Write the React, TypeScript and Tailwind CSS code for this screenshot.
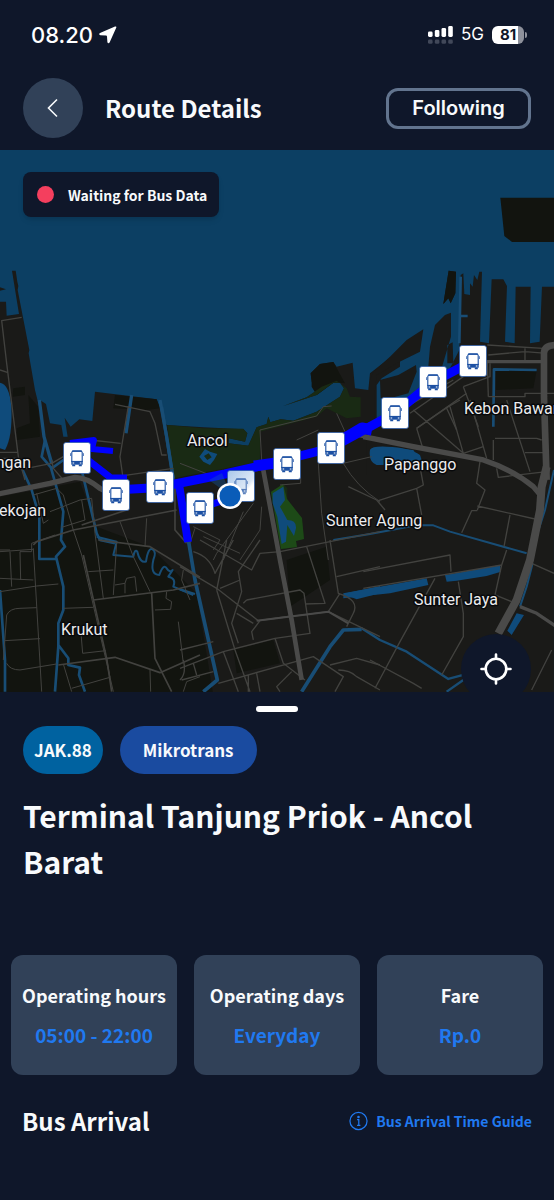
import type { JSX } from "react";

type Tile = { x: number; y: number; d: string };
type Road = Tile & { w: number };

const CONFIG = {
  code: "JAK.88",
  service: "Mikrotrans",
  title: "Terminal Tanjung Priok - Ancol Barat",
  facts: [
    { label: "Operating hours", value: "05:00 - 22:00" },
    { label: "Operating days", value: "Everyday" },
    { label: "Fare", value: "Rp.0" },
  ],
} as const;

const STOPS = [
  { x: 77, y: 458 },
  { x: 116, y: 495 },
  { x: 160, y: 487 },
  { x: 200, y: 508 },
  { x: 241, y: 486, passed: true },
  { x: 287, y: 464 },
  { x: 331, y: 448 },
  { x: 395, y: 413 },
  { x: 433, y: 382 },
  { x: 473, y: 361 },
];

const PLACES: { name: string; x: number; y: number; anchor?: "end" }[] = [
  { name: "Ancol", x: 187, y: 446 },
  { name: "Kebon Bawang", x: 464, y: 414 },
  { name: "Papanggo", x: 384, y: 470 },
  { name: "Sunter Agung", x: 326, y: 526 },
  { name: "Sunter Jaya", x: 414, y: 605 },
  { name: "Krukut", x: 61, y: 635 },
  { name: "ngan", x: 31, y: 468, anchor: "end" },
  { name: "ekojan", x: 46, y: 516, anchor: "end" },
];

/* Map geometry: every tile is drawn at 3x and placed by its top-left corner */
const LAND: Tile[] = [
  {
    x: 0,
    y: 250,
    d: "M0 112L18 118L0 122ZM0 155H18L20 197L57 192L36 62L47 62L52 95L55 108L53 120L88 300L86 310L105 420L120 480L120 450L138 462L150 520L184 525L190 560L203 560L194 503L212 530L238 508L277 513L285 425L470 448L480 475L496 540L525 700H0Z",
  },
  {
    x: 160,
    y: 350,
    d: "M0 190L20 225L130 232L250 238L262 250L255 275L207 265L205 280L265 287L290 232L320 222L325 200L331 217L362 208L400 212L470 185L540 140L552 115L540 98L520 98L470 135L370 168L440 142L470 122L455 95L452 70L480 42L520 36L530 50L578 38L585 115L625 120L630 70L720 0V50L665 85L650 105V215L720 225V390H0Z",
  },
  {
    x: 370,
    y: 180,
    d: "M0 600L10 575L60 530L110 480L160 448L150 515L80 550L20 585L14 640V740H0ZM30 600L85 585L138 555L140 575L115 640L60 655H32ZM175 560L180 500L195 435L225 405L243 398V470L225 530L215 565ZM236 272L258 275L256 340L242 370L235 355L220 372ZM232 495L248 487L250 550H232ZM268 510L272 285L280 280L283 342L300 345V310L308 320L312 285L322 300L328 275H336L330 485L357 490L365 298H400L411 318L405 485L434 490L437 320H482L480 490L509 485L516 320H560V890H-10V740L60 690L200 600L240 565Z",
  },
  { x: 0, y: 475, d: "M0 0H1662V660H0Z" },
];

const DARK_LAND: Tile[] = [
  { x: 370, y: 180, d: "M391 53H560V186H426L403 168Z" },
  { x: 370, y: 180, d: "M236 272L258 275L256 340L242 370L235 355L220 372Z" },
  { x: 160, y: 350, d: "M455 95L452 70L480 42L520 36L555 100L540 98L520 98L470 135L455 110Z" },
  { x: 0, y: 440, d: "M0 170L240 125L290 260L450 320L590 460L640 765H0Z" },
  { x: 0, y: 250, d: "M40 415L75 410V435L38 440ZM85 435L115 470L120 560L50 570V535L90 520ZM345 435L470 448L480 475L440 480L340 475Z" },
  { x: 370, y: 180, d: "M375 570L500 572L490 625L378 630Z" },
  { x: 180, y: 540, d: "M160 330L280 300L300 370L170 400ZM320 60L440 20L450 120L330 200Z" },
];

const PARKS: Tile[] = [
  {
    x: 160,
    y: 350,
    d: "M22 225L130 235L250 236L262 250L255 275L207 265L205 280L265 287L290 232L320 222L325 200L331 217L362 208L400 212L470 185L540 140L552 115L540 98L520 98L470 135L370 168L440 142L485 110L530 92L560 115L570 140L602 142V200L560 205L500 175L470 200L300 245L300 335L40 385Z",
  },
  { x: 200, y: 470, d: "M212 65L250 42L262 55V88L305 145L312 207L288 212L290 232L242 238Z" },
];

const LAKES: Tile[] = [
  { x: 160, y: 350, d: "M118 320L135 297L150 305L172 312L162 330L150 345L130 335ZM132 318L142 330L155 322L146 310ZM630 300Q640 290 680 292L760 300L780 330L720 345L650 345Q625 335 630 300Z" },
  { x: 370, y: 400, d: "M0 150Q5 138 50 140Q120 142 150 165L155 180Q100 200 40 195Q0 190 0 150ZM225 525L390 495L393 515L350 528L260 542L230 545ZM-80 580L170 535L175 555L60 580L-80 595ZM412 692L440 640L462 645L425 705Z" },
  { x: 200, y: 470, d: "M218 70L250 50L255 90L240 110L262 150Q290 150 288 175L282 198L262 165L258 215L245 222L232 140L218 100Z" },
  { x: 0, y: 250, d: "M0 398Q28 402 34 470Q38 560 15 600L0 595Z" },
  { x: 180, y: 540, d: "M498 160L600 138V160L530 178L510 170Z" },
];

const CANALS: Road[] = [
  { x: 0, y: 250, w: 10, d: "M118 450L132 560L155 640M395 435L378 550M480 450L500 560L520 690" },
  { x: 0, y: 440, w: 8, d: "M68 90L95 150L118 230V357H168M152 80L190 215L183 300L195 320L168 350L190 440V510L175 550V620L165 755M175 615L205 655V675L240 683L237 705L255 755M245 90L290 280L300 300L345 310M135 0L125 50L155 85L190 60M0 450L15 660V755" },
  { x: 0, y: 440, w: 6, d: "M290 290L350 305L340 345L400 350Q405 325 412 335Q420 370 438 365Q445 320 458 328Q470 335 460 360Q450 405 478 405Q490 370 500 385Q510 400 518 390L505 410Q530 415 520 440L580 465" },
  { x: 180, y: 540, w: 11, d: "M25 0L45 120L112 420L70 455M365 455L450 320L490 270L545 268" },
  { x: 180, y: 540, w: 7, d: "M0 148L45 162M545 265L600 300L680 335L805 417L850 405M850 420L800 455" },
  { x: 370, y: 400, w: 6, d: "M-110 420L0 402L140 376H190L240 395L470 460M488 490L470 560L450 620M552 210L525 330L480 470" },
  { x: 370, y: 180, w: 8, d: "M500 570L372 568L370 740M270 408H293M272 290L268 490" },
  { x: 160, y: 350, w: 9, d: "M5 170L40 385" },
];

const ROADS: Road[] = [
  { x: 0, y: 250, w: 4, d: "M65 202L5 212L20 340L55 620L75 690M0 360L22 367M345 463L450 485L465 520L485 615H500M385 468L360 620L370 690M270 570L362 580M350 680L520 655M0 607H55M0 625H55L80 655L155 640L190 620M155 630L160 655L190 690" },
  { x: 0, y: 440, w: 3, d: "M100 165L170 145L190 165L220 270L245 345L340 755M110 160L130 250L145 240M150 215L240 180L275 175L285 280L310 475M245 180L255 240L185 262M0 335L100 328M0 415L100 420M30 335L35 440M60 335L62 420M0 455L110 438L175 432M100 325L125 755M20 525Q30 505 60 505L110 503M20 525L10 660M15 602L120 596M190 505L280 502M20 670Q30 690 60 690L170 672M265 395L340 390M350 310L340 465M345 435L375 430L380 415L405 410L410 455M375 430V460M243 580L248 640L318 632M190 672L215 755M215 745L330 712L320 655M500 455L498 475L515 485L512 508L465 510M535 545L550 670M450 690L452 755M550 755L560 725L600 710M570 480L545 420L550 390M440 235L435 320M360 245L400 350L450 455M0 330H30M60 335H95V310L165 285" },
  { x: 0, y: 440, w: 5, d: "M100 315L110 305L220 270L530 210M295 300L450 320L600 412M280 480L520 450L600 430M455 460L465 655L515 755M175 675L345 652L480 698L600 645M250 345L320 655L335 755M525 130V270L560 310M245 255L380 210" },
  { x: 180, y: 380, w: 3, d: "M240 150L410 108L430 80L455 78M240 150L245 240M0 250L90 285L220 265M415 250L425 400L445 540M300 315L362 310V295M220 370L110 520L100 540M245 380L240 450L180 540M190 395L130 540M40 440L120 480L100 510M45 445L30 490M70 470L180 520M470 100L495 155M350 180L415 150M490 250Q530 320 600 365M490 250L575 230" },
  { x: 180, y: 540, w: 4, d: "M60 0L215 90L240 40L300 35L600 -25M140 0L110 150M160 0L105 100Q90 50 40 35M240 0L175 95L185 155L155 250L175 310M0 80L110 145L235 242L445 215L480 160M235 242L335 228M220 300L215 275L240 242M110 150L165 330L210 455M120 145L180 120M200 180L360 150L372 160L390 280L285 295M190 190L200 180M170 220L220 250M445 215L600 290M450 0L475 160Q540 180 520 220L500 260M380 20L435 190L375 192M470 110L600 80M130 335L175 455M0 330L100 305M0 385L130 335L285 295M5 420L100 395M40 370L50 405M115 430L400 350L490 410L465 455M285 295L310 370L375 420M335 395L290 440L300 455M205 405V455M230 400L240 455M450 375L530 355L600 375M475 390Q510 390 530 410L600 450M0 420Q20 400 10 360" },
  { x: 370, y: 400, w: 4, d: "M130 30L280 160L240 20M140 85L235 20L270 0M140 85L160 150M280 160L340 140M300 0L350 175M375 115H500L515 120M410 0L480 215M465 158H520M330 185L320 250L345 270L322 330M380 205L385 232L530 215M25 302L140 265L155 345M-65 260L20 300L45 330M140 265L160 255L150 200M322 318L495 357M322 332H305L275 398M420 345L402 440M-20 515L240 465L243 515M-20 565L395 495L410 450M395 495L375 585L425 605M265 545L280 640V710L215 825M195 535L90 725L15 865M0 780L130 850L155 865M485 490L552 520M545 750L485 870M370 120V180" },
  { x: 370, y: 180, w: 4, d: "M352 495L520 505M355 525L465 515L530 520M465 505V540M352 545L355 650M355 650H465V640H552M280 620L360 590V550M280 620L325 740M120 700L280 590M110 680L250 600M230 685L260 750M140 745L290 640" },
];

const HIGHWAYS: Road[] = [
  { x: 0, y: 440, w: 16, d: "M-5 162L150 130L225 112Q260 112 300 145L330 160" },
  { x: 180, y: 380, w: 14, d: "M248 260L300 540L335 720L365 900" },
  { x: 180, y: 540, w: 6, d: "M230 242L445 215L505 250" },
  { x: 180, y: 380, w: 12, d: "M535 165L600 180" },
  { x: 370, y: 400, w: 16, d: "M-20 110L130 140L340 180Q430 210 490 260L515 290" },
  { x: 370, y: 400, w: 24, d: "M530 200L515 260L510 330L480 480L440 600L385 700" },
  { x: 370, y: 180, w: 20, d: "M560 495Q522 495 522 520V650L530 900" },
  { x: 370, y: 180, w: 10, d: "M350 545H520" },
  { x: 370, y: 400, w: 10, d: "M450 620L500 640L560 680" },
];

function Shapes({ tiles, fill }: { tiles: Tile[]; fill: string }) {
  return (
    <g fill={fill} fillRule="evenodd">
      {tiles.map((t, i) => (
        <path key={i} d={t.d} transform={`translate(${t.x} ${t.y}) scale(0.3333)`} />
      ))}
    </g>
  );
}

function Lines({ tiles, stroke }: { tiles: Road[]; stroke: string }) {
  return (
    <g fill="none" stroke={stroke} strokeLinejoin="round">
      {tiles.map((t, i) => (
        <path
          key={i}
          d={t.d}
          strokeWidth={t.w}
          transform={`translate(${t.x} ${t.y}) scale(0.3333)`}
        />
      ))}
    </g>
  );
}

function Stop({ x, y, passed }: { x: number; y: number; passed?: boolean }) {
  return (
    <g transform={`translate(${x} ${y})`}>
      <rect
        x="-13.5"
        y="-15.5"
        width="27"
        height="31"
        rx="2.5"
        fill={passed ? "url(#faded)" : "#fff"}
        stroke="#2356a8"
        strokeWidth="0.7"
      />
      <g fill="none" stroke="#1c50a3" opacity={passed ? 0.7 : 1}>
        <path d="M-5.2 4V-5.4Q-5.2 -6.8 -3.7 -6.8H3.7Q5.2 -6.8 5.2 -5.4V4" strokeWidth="1.1" />
        <path d="M-4.8 -7H4.8" strokeWidth="1.5" />
        <path d="M-6.5 -4.8V-2M6.5 -4.8V-2" strokeWidth="0.7" />
        <path d="M-5.7 4.8H5.7" strokeWidth="3.8" />
        <path d="M-4.8 7.4H-1.8M1.8 7.4H4.8" strokeWidth="1.8" />
        <path d="M-4.4 5H-2.8M2.8 5H4.4" stroke="#fff" strokeWidth="1.2" />
      </g>
    </g>
  );
}

function RouteMap() {
  return (
    <svg viewBox="0 150 554 542" className="block h-auto w-full bg-[#0c3f63]" role="img" aria-label="Route map">
      <defs>
        <linearGradient id="faded" x1="0" y1="0" x2="1" y2="1">
          <stop offset="0" stopColor="#a9c8ea" />
          <stop offset="0.6" stopColor="#dce8f6" />
          <stop offset="0.7" stopColor="#fff" />
        </linearGradient>
      </defs>

      <Shapes tiles={LAND} fill="#1a1a18" />
      <Shapes tiles={DARK_LAND} fill="#12140f" />
      <Shapes tiles={PARKS} fill="#192a14" />
      <path d="M271 492L283 484L287 499L302 518L304 539L296 541L297 547L281 549Z" fill="#1d4a17" />
      <Shapes tiles={LAKES} fill="#0f4b7b" />
      <Lines tiles={CANALS} stroke="#184d75" />
      <Lines tiles={ROADS} stroke="#42423f" />
      <Lines tiles={HIGHWAYS} stroke="#4a4a49" />

      {/* Route line */}
      <g fill="none" stroke="#0000fe" strokeLinejoin="round">
        <path d="M70 443L94 440L92 449L113 451" strokeWidth="6" />
        <path d="M84 457L111 478H127" strokeWidth="7" />
        <path d="M116 490L150 488L175 484L225 474L260 466L331 448L362 431L395 413L433 382L473 361" strokeWidth="9" />
        <path d="M254 466L290 461M345 438L362 428L372 430" strokeWidth="11" />
        <path d="M179 484L188 542" strokeWidth="8" />
        <path d="M200 508L231 498" strokeWidth="7" />
      </g>

      {STOPS.map((s) => (
        <Stop key={s.x} {...s} />
      ))}

      {/* User position */}
      <path d="M231 496L209 480L222 473Z" fill="#1460b0" opacity="0.35" />
      <circle cx="230" cy="496" r="13" fill="#fff" />
      <circle cx="230" cy="496" r="10.5" fill="#0a5cb8" />

      <g
        className="font-['Roboto',sans-serif] text-base font-normal"
        fill="#ececee"
        stroke="#08090b"
        strokeWidth="3"
        strokeLinejoin="round"
        paintOrder="stroke"
      >
        {PLACES.map((p) => (
          <text key={p.name} x={p.x} y={p.y} textAnchor={p.anchor}>
            {p.name}
          </text>
        ))}
      </g>
    </svg>
  );
}

function StatusBar() {
  return (
    <div className="flex h-[70px] items-center justify-between pl-[31px] pr-[27px] font-['Inter',sans-serif] text-white">
      <div className="flex items-center gap-1.5">
        <span className="text-[22px] font-medium">08.20</span>
        <svg width="18" height="18" viewBox="0 0 18 18" fill="currentColor" aria-hidden>
          <path d="M16 0.6Q17.9 0 17.2 1.8L10.6 16.6Q9.2 18.2 8.4 16.2L8 10.6Q7.9 9.6 7 9.5L1.4 9.2Q-0.8 8.4 1 7.1Z" />
        </svg>
      </div>
      <div className="flex items-center gap-2">
        <svg width="25" height="18" viewBox="0 0 25 18" aria-hidden>
          <g fill="#fff">
            <rect x="0" y="5.5" width="4.6" height="5.5" rx="1.4" />
            <rect x="6.8" y="4" width="4.6" height="7" rx="1.4" />
            <rect x="13.5" y="2" width="4.6" height="9" rx="1.4" />
            <rect x="20.2" y="0" width="4.6" height="11" rx="1.4" />
          </g>
          <g fill="#414859">
            <rect x="0" y="13.6" width="4.6" height="4.2" rx="1.4" />
            <rect x="6.8" y="13.6" width="4.6" height="4.2" rx="1.4" />
            <rect x="13.5" y="13.6" width="4.6" height="4.2" rx="1.4" />
            <rect x="20.2" y="13.6" width="4.6" height="4.2" rx="1.4" />
          </g>
        </svg>
        <span className="text-[17px] font-normal">5G</span>
        <div className="flex items-center gap-px">
          <div className="flex h-[18px] w-8 items-center justify-center rounded-md bg-linear-to-r from-white from-80% to-[#8e919b] to-80% text-[15px] font-bold text-[#0f172a]">
            81
          </div>
          <span className="h-1.5 w-0.5 rounded-r-full bg-[#8e919b]" />
        </div>
      </div>
    </div>
  );
}

export default function App(): JSX.Element {
  return (
    <div className="min-h-screen bg-[#0f172a] font-['Noto_Sans_CJK_JP',sans-serif] font-bold text-slate-50">
      <StatusBar />

      <header className="flex items-center px-[23px] pt-2 pb-3">
        <button
          type="button"
          aria-label="Back"
          className="flex size-[60px] items-center justify-center rounded-full bg-slate-700"
        >
          <svg width="12" height="20" viewBox="0 0 12 20" fill="none" stroke="currentColor" strokeWidth="1.6" aria-hidden>
            <path d="M10 1.5L1.5 10L10 18.5" />
          </svg>
        </button>
        <h1 className="ml-[22px] text-2xl leading-8">Route Details</h1>
        <button
          type="button"
          className="ml-auto h-[41px] w-[145px] rounded-xl border-3 border-slate-500 font-['Inter',sans-serif] text-xl leading-6 font-semibold"
        >
          Following
        </button>
      </header>

      <main>
        <section className="relative overflow-hidden">
          <RouteMap />
          <div className="absolute top-[22px] left-[23px] flex h-[45px] items-center gap-3.5 rounded-lg bg-[#0f172a] pr-3 pl-3.5 text-sm leading-5 shadow-md">
            <span className="size-[17px] rounded-full bg-[#f43f5e]" />
            Waiting for Bus Data
          </div>
          <button
            type="button"
            aria-label="Center on my location"
            className="absolute right-[23px] -bottom-3 flex size-[70px] items-center justify-center rounded-full bg-[#0f172a]"
          >
            <svg width="32" height="32" viewBox="0 0 32 32" fill="none" stroke="#fff" strokeWidth="2.6" strokeLinecap="round" aria-hidden>
              <circle cx="16" cy="16" r="10.3" />
              <path d="M16 1.5V5.5M16 26.5V30.5M1.5 16H5.5M26.5 16H30.5" />
            </svg>
          </button>
        </section>

        {/* Bottom sheet */}
        <section className="pt-3.5 pb-16">
          <div className="mx-auto h-1.5 w-[42px] rounded-full bg-white" />

          <div className="mt-3.5 flex gap-[17px] px-[23px] text-[17px] leading-6">
            <span className="flex h-12 items-center rounded-full bg-[#0062a0] px-[11px]">
              {CONFIG.code}
            </span>
            <span className="flex h-12 items-center rounded-full bg-[#1a4ba0] px-[23px]">
              {CONFIG.service}
            </span>
          </div>

          <h2 className="mt-[18px] px-[23px] text-3xl leading-[46px]">{CONFIG.title}</h2>

          <dl className="mt-[71px] grid grid-cols-3 gap-[17px] px-[11px]">
            {CONFIG.facts.map((f) => (
              <div
                key={f.label}
                className="flex h-[120px] flex-col items-center justify-center gap-3 rounded-xl bg-slate-700 text-center whitespace-nowrap"
              >
                <dt className="text-lg leading-7">{f.label}</dt>
                <dd className="text-[19px] leading-7 text-[#2079f0]">{f.value}</dd>
              </div>
            ))}
          </dl>

          <div className="mt-[30px] flex items-center justify-between px-[22px]">
            <h3 className="text-2xl leading-8">Bus Arrival</h3>
            <a href="#guide" className="flex items-center gap-2 text-sm leading-5 text-[#2079f0]">
              <svg width="19" height="20" viewBox="0 0 20 20" fill="none" stroke="currentColor" strokeWidth="1.3" aria-hidden>
                <circle cx="10" cy="10" r="9" />
                <path d="M8.5 8.5H10.3V14.5M8.5 14.5H12" />
                <circle cx="10" cy="5.8" r="0.7" fill="currentColor" />
              </svg>
              Bus Arrival Time Guide
            </a>
          </div>
        </section>
      </main>
    </div>
  );
}
